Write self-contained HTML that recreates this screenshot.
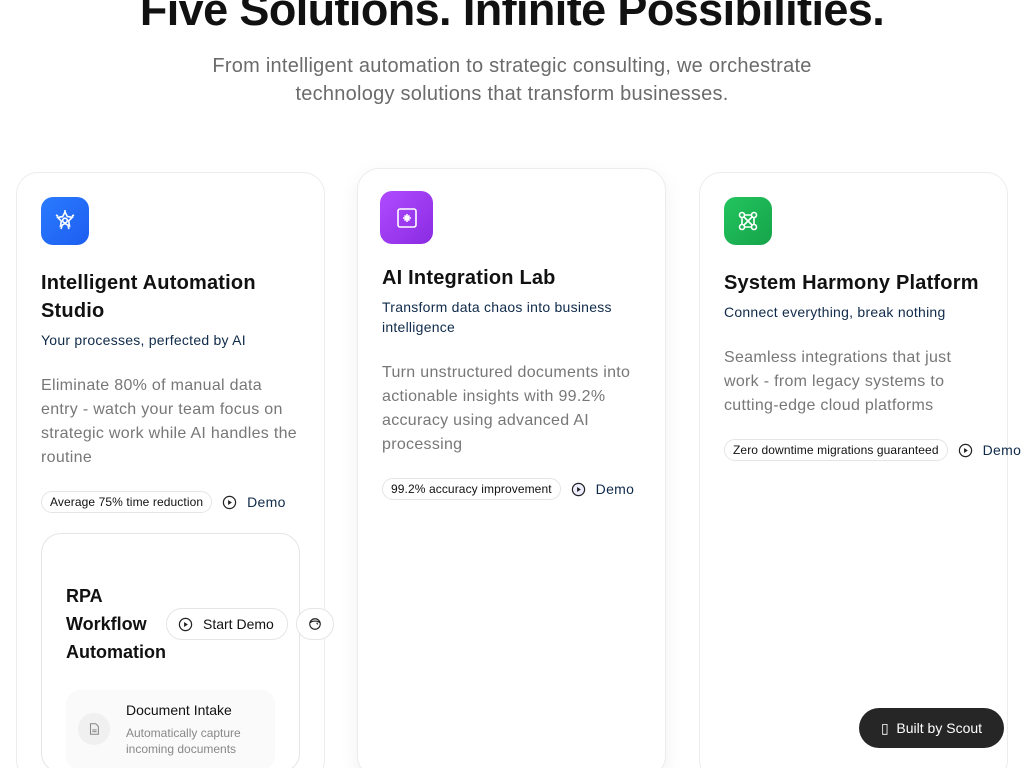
<!DOCTYPE html>
<html style="overflow:hidden;height:768px"><head><meta charset="utf-8"><style>
*{box-sizing:border-box;margin:0;padding:0}
body{width:1024px;height:768px;overflow:hidden;background:#fff;font-family:"Liberation Sans",sans-serif;position:relative;color:#111}
h1{position:absolute;top:-16px;left:0;width:1024px;text-align:center;font-size:45px;font-weight:700;color:#111;letter-spacing:-0.6px}
.sub{position:absolute;top:52px;left:0;width:1024px;text-align:center;font-size:20px;line-height:28px;color:#6b6b6b;letter-spacing:.25px}
.card{position:absolute;width:309px;height:610px;border:1px solid #ececec;border-radius:22px;background:#fff;padding:24px}
.mid{box-shadow:0 6px 20px rgba(0,0,0,.06)}
.ic{width:48px;height:48px;border-radius:12px;display:flex;align-items:center;justify-content:center}
.t{font-size:20px;font-weight:700;line-height:28px;margin-top:24px;color:#111;letter-spacing:.2px}
.s{font-size:14px;line-height:20px;color:#0f2a4a;margin-top:5px;letter-spacing:.25px}
.d{font-size:16px;line-height:24px;color:#777;margin-top:24px;letter-spacing:.3px}
.row{display:flex;align-items:center;margin-top:21px;white-space:nowrap}
.badge{font-size:12px;border:1px solid #e5e5e5;border-radius:12px;padding:3px 8px;color:#111;letter-spacing:.1px}
.demo{display:flex;align-items:center;margin-left:10px;font-size:14px;color:#0f2a4a;letter-spacing:.3px}
.demo svg{margin-right:10px}
.rpa{position:absolute;left:41px;top:533px;width:259px;height:240px;border:1px solid #e5e5e5;border-radius:20px;padding:24px}
.rt{position:absolute;left:24px;top:48px;font-size:18px;font-weight:700;line-height:28px}
.sd{position:absolute;left:124px;top:74px;width:122px;height:32px;border:1px solid #e5e5e5;border-radius:16px;background:#fff;display:flex;align-items:center;padding-left:11px;font-size:14px}
.sd svg{margin-right:10px}
.sm{position:absolute;left:254px;top:74px;width:38px;height:32px;border:1px solid #e5e5e5;border-radius:16px;background:#fff;display:flex;align-items:center;justify-content:center}
.di{position:absolute;left:24px;top:156px;width:209px;height:80px;background:#fafafa;border-radius:14px}
.di .c{position:absolute;left:12px;top:23px;width:32px;height:32px;border-radius:16px;background:#f0f0f0;display:flex;align-items:center;justify-content:center}
.di .a{position:absolute;left:60px;top:12px;font-size:14px;color:#111}
.di .b{position:absolute;left:60px;top:35px;font-size:12px;line-height:16px;color:#888}
.scout{position:absolute;left:859px;top:708px;width:145px;height:40px;border-radius:20px;background:#262626;color:#fff;font-size:14px;display:flex;align-items:center;justify-content:center}
</style></head><body>
<h1>Five Solutions. Infinite Possibilities.</h1>
<div class="sub">From intelligent automation to strategic consulting, we orchestrate<br>technology solutions that transform businesses.</div>

<div class="card" style="left:16px;top:172px">
<div class="ic" style="background:linear-gradient(135deg,#2a7bff,#1d5ef0)"><svg width="24" height="24" viewBox="0 0 24 24" fill="none" stroke="#fff" stroke-width="1.6"><path d="M12 3l2.3 4.5 5 .8-3.6 3.6.8 5L12 14.6 7.5 17l.8-5-3.6-3.6 5-.8z"/><circle cx="12" cy="11.5" r="2.3"/><path d="M12 1v2M3 6l2 1M21 6l-2 1M8 20l1-3M16 20l-1-3"/></svg></div>
<div class="t">Intelligent Automation Studio</div>
<div class="s">Your processes, perfected by AI</div>
<div class="d">Eliminate 80% of manual data entry - watch your team focus on strategic work while AI handles the routine</div>
<div class="row"><span class="badge">Average 75% time reduction</span><span class="demo"><svg width="15" height="15" viewBox="0 0 16 16"><circle cx="8" cy="8" r="6.5" fill="none" stroke="#222" stroke-width="1.3"/><path d="M6.5 5.3v5.4L10.5 8z" fill="#222"/></svg>Demo</span></div>
</div>
<div class="rpa">
<div class="rt">RPA<br>Workflow<br>Automation</div>
<div class="sd"><svg width="15" height="15" viewBox="0 0 16 16"><circle cx="8" cy="8" r="6.5" fill="none" stroke="#222" stroke-width="1.3"/><path d="M6.5 5.3v5.4L10.5 8z" fill="#222"/></svg>Start Demo</div>
<div class="sm"><svg width="14" height="14" viewBox="0 0 16 16" fill="none" stroke="#222" stroke-width="1.3"><circle cx="8" cy="8" r="6"/><path d="M2.5 6.5C5 4 11 4 13.5 6.5M10 6.5l1 2"/></svg></div>
<div class="di"><div class="c"><svg width="14" height="14" viewBox="0 0 16 16" fill="none" stroke="#888" stroke-width="1.2"><path d="M4 2h6l3 3v9H4z"/><path d="M6 9h5M6 11h5"/></svg></div><div class="a">Document Intake</div><div class="b">Automatically capture<br>incoming documents</div></div>
</div>

<div class="card mid" style="left:357px;top:168px">
<div class="ic" style="width:53px;height:53px;margin-left:-2px;margin-top:-2px;background:linear-gradient(135deg,#b04bff,#8a2be2)"><svg width="24" height="24" viewBox="0 0 24 24" fill="none" stroke="#fff" stroke-width="1.6"><rect x="3" y="3" width="18" height="18" rx="2"/><path d="M12 8v8M8 12h8M9.5 9.5l5 5M14.5 9.5l-5 5"/></svg></div>
<div class="t" style="margin-top:20px">AI Integration Lab</div>
<div class="s">Transform data chaos into business intelligence</div>
<div class="d">Turn unstructured documents into actionable insights with 99.2% accuracy using advanced AI processing</div>
<div class="row"><span class="badge">99.2% accuracy improvement</span><span class="demo"><svg width="15" height="15" viewBox="0 0 16 16"><circle cx="8" cy="8" r="6.5" fill="#eef" stroke="#222" stroke-width="1.3"/><path d="M6.5 5.3v5.4L10.5 8z" fill="#222"/></svg>Demo</span></div>
</div>

<div class="card" style="left:699px;top:172px">
<div class="ic" style="background:linear-gradient(135deg,#22c55e,#16a34a)"><svg width="24" height="24" viewBox="0 0 24 24" fill="none" stroke="#fff" stroke-width="1.6"><circle cx="6" cy="6" r="2.5"/><circle cx="18" cy="6" r="2.5"/><circle cx="6" cy="18" r="2.5"/><circle cx="18" cy="18" r="2.5"/><path d="M8.5 6h7M8.5 18h7M6 8.5v7M18 8.5v7M8 8l8 8M16 8l-8 8"/></svg></div>
<div class="t">System Harmony Platform</div>
<div class="s">Connect everything, break nothing</div>
<div class="d">Seamless integrations that just work - from legacy systems to cutting-edge cloud platforms</div>
<div class="row"><span class="badge">Zero downtime migrations guaranteed</span><span class="demo"><svg width="15" height="15" viewBox="0 0 16 16"><circle cx="8" cy="8" r="6.5" fill="none" stroke="#222" stroke-width="1.3"/><path d="M6.5 5.3v5.4L10.5 8z" fill="#222"/></svg>Demo</span></div>
</div>

<div class="scout">▯&nbsp; Built by Scout</div>
</body></html>
